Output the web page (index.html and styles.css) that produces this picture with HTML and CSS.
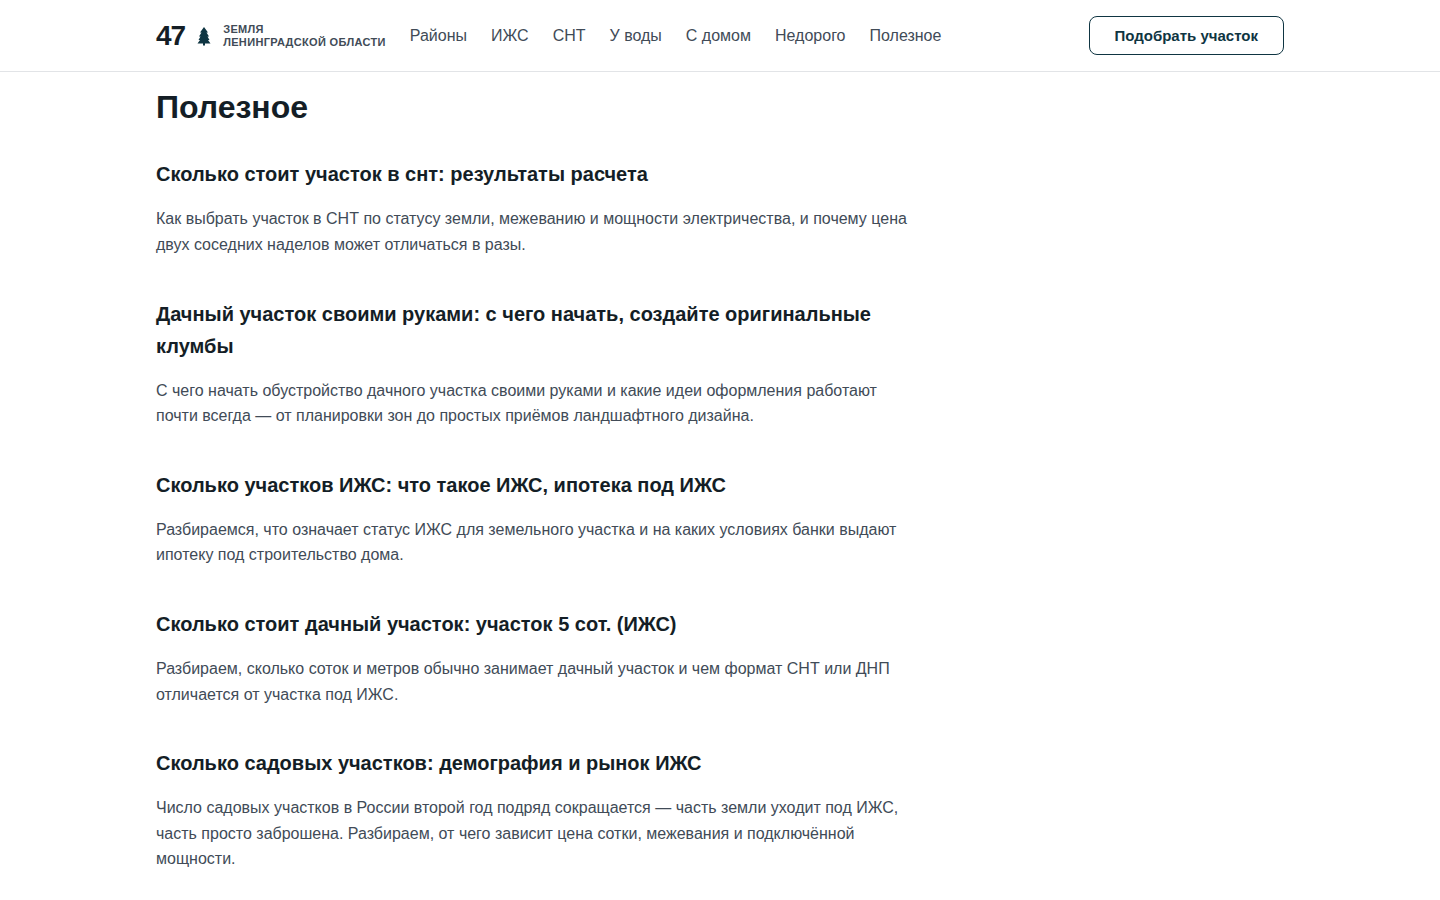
FILE: index.html
```html
<!DOCTYPE html>
<html lang="ru">
<head>
<meta charset="utf-8">
<meta name="viewport" content="width=device-width, initial-scale=1">
<title>Полезное</title>
<link rel="stylesheet" href="styles.css">
</head>
<body>
<header class="header">
  <div class="container header-inner">
    <a class="logo" href="#">
      <span class="logo-number">47</span>
      <svg class="logo-tree" viewBox="0 0 22 22" aria-hidden="true"><path d="M11 2 7 7.500h1.500L6 11.500h1.500L5.500 15H7l-2.500 3.500h5.500V20.500h2v-2h5.500L15 15h1.500l-2-3.500H16l-2.500-4H15z"/></svg>
      <span class="logo-text">Земля<br>Ленинградской области</span>
    </a>
    <nav class="nav">
      <a href="#">Районы</a>
      <a href="#">ИЖС</a>
      <a href="#">СНТ</a>
      <a href="#">У воды</a>
      <a href="#">С домом</a>
      <a href="#">Недорого</a>
      <a href="#">Полезное</a>
    </nav>
    <button class="button" type="button">Подобрать участок</button>
  </div>
</header>
<main class="container main">
  <h1 class="title">Полезное</h1>
  <div class="articles">
    <article>
      <h2 class="article-title"><a href="#">Сколько стоит участок в снт: результаты расчета</a></h2>
      <p class="article-text">Как выбрать участок в СНТ по статусу земли, межеванию и мощности электричества, и почему цена двух соседних наделов может отличаться в разы.</p>
    </article>
    <article>
      <h2 class="article-title"><a href="#">Дачный участок своими руками: с чего начать, создайте оригинальные клумбы</a></h2>
      <p class="article-text">С чего начать обустройство дачного участка своими руками и какие идеи оформления работают почти всегда — от планировки зон до простых приёмов ландшафтного дизайна.</p>
    </article>
    <article>
      <h2 class="article-title"><a href="#">Сколько участков ИЖС: что такое ИЖС, ипотека под ИЖС</a></h2>
      <p class="article-text">Разбираемся, что означает статус ИЖС для земельного участка и на каких условиях банки выдают ипотеку под строительство дома.</p>
    </article>
    <article>
      <h2 class="article-title"><a href="#">Сколько стоит дачный участок: участок 5 сот. (ИЖС)</a></h2>
      <p class="article-text">Разбираем, сколько соток и метров обычно занимает дачный участок и чем формат СНТ или ДНП отличается от участка под ИЖС.</p>
    </article>
    <article>
      <h2 class="article-title"><a href="#">Сколько садовых участков: демография и рынок ИЖС</a></h2>
      <p class="article-text">Число садовых участков в России второй год подряд сокращается — часть земли уходит под ИЖС, часть просто заброшена. Разбираем, от чего зависит цена сотки, межевания и подключённой мощности.</p>
    </article>
  </div>
</main>
</body>
</html>
```
FILE: styles.css
```css
* { box-sizing: border-box; }
body {
  margin: 0;
  background: #fff;
  color: #414b57;
  font: 16px/1.6 "Liberation Sans", Arial, sans-serif;
}
a { color: inherit; text-decoration: none; }
.container { max-width: 1176px; margin: 0 auto; padding: 0 24px; }
.header { border-bottom: 1px solid #e2e4e7; }
.header-inner { display: flex; align-items: center; gap: 24px; padding-top: 16px; padding-bottom: 16px; }
.logo { display: flex; align-items: center; gap: 8px; }
.logo-number { color: #141e26; font-size: 28px; font-weight: 700; line-height: 28px; letter-spacing: -1px; }
.logo-tree { width: 22px; height: 22px; fill: #0f3542; }
.logo-text { font-size: 11px; font-weight: 700; line-height: 13px; letter-spacing: 0.03em; text-transform: uppercase; white-space: nowrap; }
.nav { display: flex; gap: 24px; }
.button {
  margin-left: auto;
  padding: 0 25px;
  height: 39px;
  border: 1px solid #0f3542;
  border-radius: 8px;
  background: #fff;
  color: #0f3542;
  font: 700 15px "Liberation Sans", Arial, sans-serif;
}
.main { padding-top: 16px; padding-bottom: 40px; }
.title { margin: 0 0 32px; color: #141e26; font-size: 32px; line-height: 1.2; }
.articles { display: grid; gap: 40px; max-width: 760px; }
.article-title { margin: 0 0 16px; color: #141e26; font-size: 20px; line-height: 32px; }
.article-text { margin: 0; }
```
